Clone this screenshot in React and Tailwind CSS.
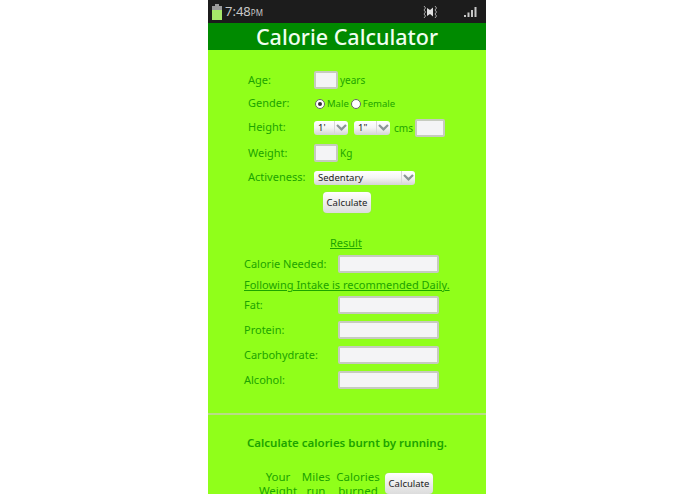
const F = "font-['Noto_Sans','Open_Sans',sans-serif]";

function Chevron() {
  return (
    <span className="flex h-full w-[14px] items-center justify-center border-l border-[#d8d8d8]">
      <svg width="11" height="7" viewBox="0 0 11 7" fill="none">
        <path d="M1 1 L5.5 5.4 L10 1" stroke="#8a9696" strokeWidth="2.2" />
      </svg>
    </span>
  );
}

function Select({ label, className }) {
  return (
    <div className={`flex h-[14px] items-center justify-between rounded-[3px] bg-gradient-to-b from-[#ffffff] via-[#f4f4f4] to-[#d4d4d4] pl-[4px] text-[9.5px] leading-none text-[#222] ${className}`}>
      <span>{label}</span>
      <Chevron />
    </div>
  );
}

function Input({ className }) {
  return <div className={`h-[18px] rounded-[2px] border-2 border-[#c6cbbf] bg-[#f4f4f6] ${className}`} />;
}

function Button({ className }) {
  return (
    <div className={`flex h-[21px] w-[48px] items-center justify-center rounded-[4px] bg-gradient-to-b from-[#ffffff] to-[#dcdcdc] text-[9.5px] leading-none text-[#222] shadow-[0_0_1px_#aaa] ${className}`}>
      Calculate
    </div>
  );
}

function Radio({ checked }) {
  return (
    <span className="flex h-[10px] w-[10px] items-center justify-center rounded-full border border-[#666] bg-white">
      {checked && <span className="h-[4px] w-[4px] rounded-full bg-[#333]" />}
    </span>
  );
}

function Row({ label, height, children }) {
  return (
    <div className={`flex items-center ${height}`}>
      <span className="mb-[2px] w-[66px] text-[11px] leading-none">{label}</span>
      <div className="flex items-center">{children}</div>
    </div>
  );
}

function ResultRow({ label, height }) {
  return (
    <div className={`flex items-center ${height}`}>
      <span className="mb-[1px] w-[94px] text-[11px] leading-none">{label}</span>
      <Input className="w-[101px]" />
    </div>
  );
}

function Col({ a, b, w }) {
  return (
    <div className={`text-center text-[11.5px] leading-[14px] ${w}`}>
      <div>{a}</div>
      <div>{b}</div>
    </div>
  );
}

export default function App() {
  return (
    <div className={`h-[494px] w-[695px] overflow-hidden bg-white pl-[208px] ${F}`}>
      <div className="flex h-[494px] w-[278px] flex-col overflow-hidden bg-[#90ff1a] text-[#1ca400]">
        <div className="flex h-[23px] shrink-0 items-center justify-between bg-[#1c1c1c] pl-[3px] pr-[9px] text-[#c8c8c8]">
          <div className="flex items-center gap-[2px]">
            <svg width="12" height="16" viewBox="0 0 12 16">
              <rect x="4" y="0" width="4" height="2" fill="#9a9a9a" />
              <rect x="1" y="2" width="10" height="4" fill="#9a9a9a" />
              <rect x="1" y="6" width="10" height="10" fill="#a6e86a" />
            </svg>
            <span className="text-[13px] leading-none">7:48<span className="text-[8px]">PM</span></span>
          </div>
          <div className="flex items-center gap-[26px]">
            <svg width="16" height="14" viewBox="0 0 16 14" fill="none">
              <path d="M5 3 L8 5 L11 2.5 V11.5 L8 9 L5 11 Z" fill="#e0e0e0" />
              <path d="M2 1 L3.5 3 L2 5 L3.5 7 L2 9 L3.5 11 L2 13" stroke="#a8a8a8" strokeWidth="1" />
              <path d="M13 1 L14.5 3 L13 5 L14.5 7 L13 9 L14.5 11 L13 13" stroke="#a8a8a8" strokeWidth="1" />
            </svg>
            <svg width="13" height="11" viewBox="0 0 13 11">
              <rect x="0" y="9" width="2" height="2" fill="#c8c8c8" />
              <rect x="3.5" y="6.5" width="2" height="4.5" fill="#c8c8c8" />
              <rect x="7" y="4" width="2" height="7" fill="#c8c8c8" />
              <rect x="10.5" y="1" width="2" height="10" fill="#c8c8c8" />
            </svg>
          </div>
        </div>

        <div className="flex h-[27px] shrink-0 items-center justify-center bg-[#008a00] text-[21.5px] font-medium leading-none text-[#f0fff0]">
          Calorie Calculator
        </div>

        <div className="flex flex-col pl-[40px] pt-[18px]">
          <Row label="Age:" height="h-[24px]">
            <Input className="w-[24px]" />
            <span className="ml-[2px] text-[10px] leading-none">years</span>
          </Row>
          <Row label="Gender:" height="h-[23px]">
            <div className="flex items-center text-[9.5px] leading-none">
              <span className="ml-[1px]"><Radio checked /></span>
              <span className="ml-[2px]">Male</span>
              <span className="ml-[2px]"><Radio /></span>
              <span className="ml-[2px]">Female</span>
            </div>
          </Row>
          <Row label="Height:" height="h-[25px]">
            <Select label="1'" className="w-[34px]" />
            <Select label={'1"'} className="ml-[6px] w-[36px]" />
            <span className="ml-[4px] text-[10px] leading-none">cms</span>
            <Input className="ml-[2px] w-[30px]" />
          </Row>
          <Row label="Weight:" height="h-[26px]">
            <Input className="w-[24px]" />
            <span className="ml-[2px] text-[10px] leading-none">Kg</span>
          </Row>
          <Row label="Activeness:" height="h-[23px]">
            <Select label="Sedentary" className="w-[101px]" />
          </Row>
          <Button className="ml-[75px] mt-[3px]" />
        </div>

        <div className="mt-[22px] flex flex-col pl-[36px]">
          <div className="ml-[86px] text-[11px] leading-[16px] underline">Result</div>
          <ResultRow label="Calorie Needed:" height="h-[26px]" />
          <div className="h-[15px] text-[11px] leading-[15px] underline">Following Intake is recommended Daily.</div>
          <ResultRow label="Fat:" height="h-[26px]" />
          <ResultRow label="Protein:" height="h-[24px]" />
          <ResultRow label="Carbohydrate:" height="h-[25px]" />
          <ResultRow label="Alcohol:" height="h-[25px]" />
        </div>

        <div className="mt-[21px] h-[2px] shrink-0 bg-[#b9dc88]" />

        <div className="mt-[20px] text-center text-[11.5px] font-semibold leading-[16px]">
          Calculate calories burnt by running.
        </div>

        <div className="mt-[19px] flex items-start pl-[47px]">
          <Col a="Your" b="Weight" w="w-[46px]" />
          <Col a="Miles" b="run" w="w-[30px]" />
          <Col a="Calories" b="burned" w="w-[54px]" />
          <Button className="mt-[3px]" />
        </div>
      </div>
    </div>
  );
}
